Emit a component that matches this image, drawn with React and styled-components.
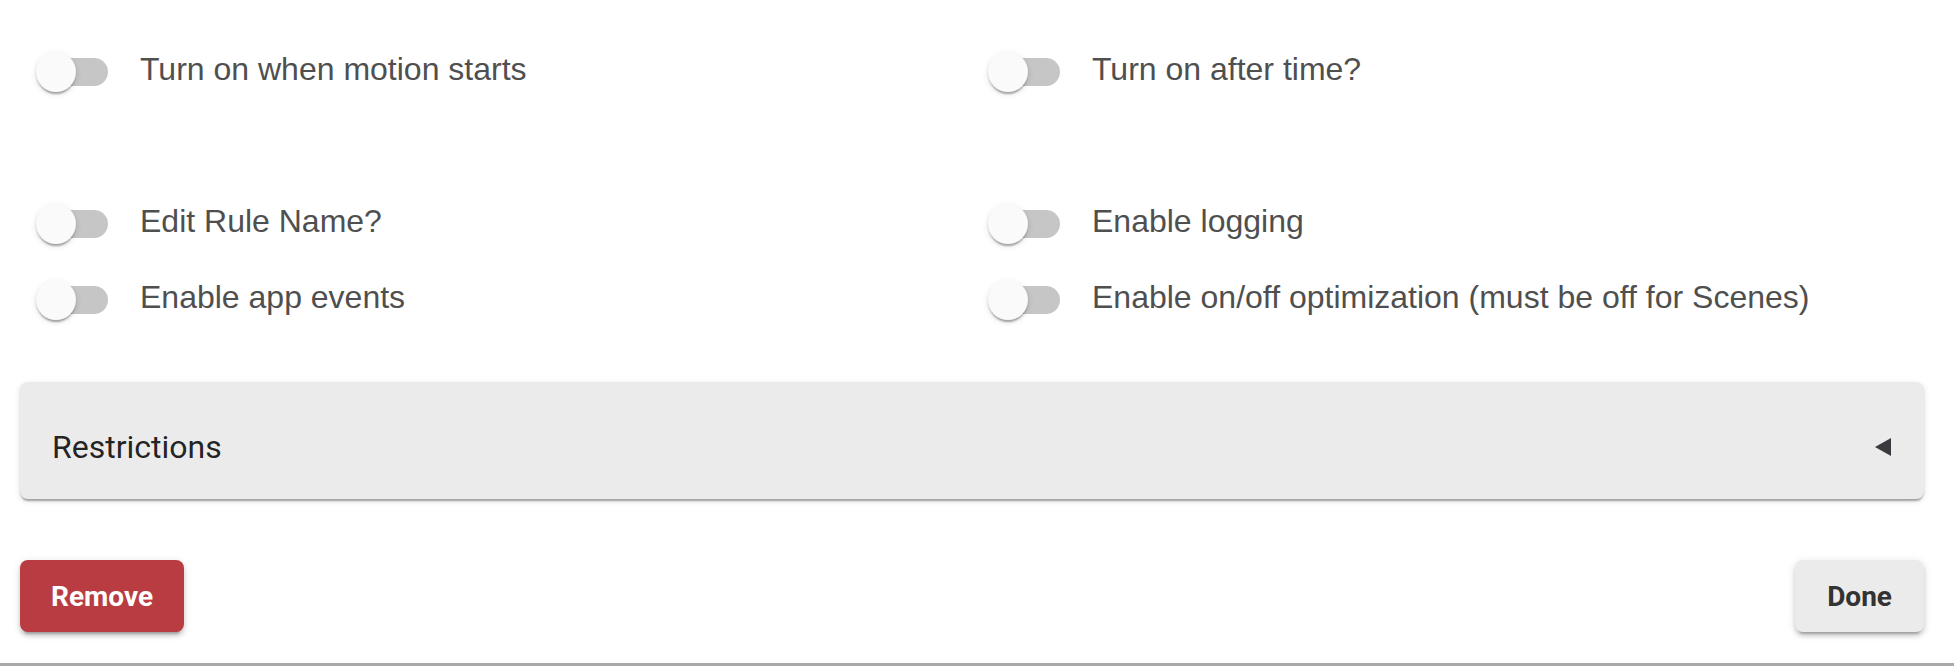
import styled, { createGlobalStyle } from "styled-components";

const GlobalStyle = createGlobalStyle`
  html, body {
    margin: 0;
    padding: 0;
    background: #fff;
  }
`;

const Page = styled.div`
  width: 1954px;
  height: 666px;
  display: flex;
  flex-direction: column;
  overflow: hidden;
`;

const ToggleGrid = styled.div`
  display: grid;
  grid-template-columns: 952px 1fr;
  grid-auto-rows: 76px;
  padding-left: 18px;
  margin-top: ${(p) => p.$top || 0}px;
`;

const ToggleLabel = styled.label`
  display: flex;
  align-items: center;
  gap: 6px;
  cursor: pointer;
`;

const SwitchRoot = styled.span`
  position: relative;
  flex: 0 0 116px;
  height: 76px;
  padding: 24px;
  box-sizing: border-box;
`;

const Track = styled.span`
  display: block;
  width: 66px;
  height: 28px;
  border-radius: 14px;
  background: #c6c6c6;
`;

const Thumb = styled.span`
  position: absolute;
  left: 18px;
  top: 18px;
  width: 40px;
  height: 40px;
  border-radius: 50%;
  background: #fafafa;
  box-shadow: 0 4px 2px -2px rgba(0, 0, 0, 0.2), 0 2px 2px 0 rgba(0, 0, 0, 0.14),
    0 2px 6px 0 rgba(0, 0, 0, 0.12);
`;

const LabelText = styled.span`
  font-family: "Liberation Sans", Arial, sans-serif;
  font-size: 32px;
  color: #4f4f4f;
  padding-bottom: 6px;
  white-space: nowrap;
`;

const Accordion = styled.div`
  margin: 44px 30px 0 20px;
  height: 117px;
  box-sizing: border-box;
  padding: 12px 33px 0 32px;
  display: flex;
  align-items: center;
  justify-content: space-between;
  background: #ebebeb;
  border-radius: 8px;
  box-shadow: 0 4px 2px -2px rgba(0, 0, 0, 0.2), 0 2px 2px 0 rgba(0, 0, 0, 0.14),
    0 2px 6px 0 rgba(0, 0, 0, 0.12);
`;

const AccordionTitle = styled.span`
  font-family: Roboto, "Liberation Sans", sans-serif;
  font-size: 32px;
  color: rgba(0, 0, 0, 0.87);
`;

const ButtonRow = styled.div`
  display: flex;
  justify-content: space-between;
  margin: 61px 30px 31px 20px;
`;

const Button = styled.button`
  height: 72px;
  padding: 0 ${(p) => (p.$danger ? 31 : 32)}px;
  border: none;
  border-radius: 8px;
  font-family: Roboto, "Liberation Sans", sans-serif;
  font-size: 28px;
  font-weight: 700;
  background: ${(p) => (p.$danger ? "#b93c42" : "#ebebeb")};
  color: ${(p) => (p.$danger ? "#fff" : "#333")};
  box-shadow: 0 6px 2px -4px rgba(0, 0, 0, 0.2), 0 4px 4px 0 rgba(0, 0, 0, 0.14),
    0 2px 10px 0 rgba(0, 0, 0, 0.12);
  cursor: pointer;
`;

const Divider = styled.div`
  height: 3px;
  background: #a9a9a9;
`;

function Toggle({ label }) {
  return (
    <ToggleLabel>
      <SwitchRoot>
        <Track />
        <Thumb />
      </SwitchRoot>
      <LabelText>{label}</LabelText>
    </ToggleLabel>
  );
}

export default function App() {
  return (
    <>
      <GlobalStyle />
      <Page>
        <ToggleGrid $top={34}>
          <Toggle label="Turn on when motion starts" />
          <Toggle label="Turn on after time?" />
        </ToggleGrid>
        <ToggleGrid $top={76}>
          <Toggle label="Edit Rule Name?" />
          <Toggle label="Enable logging" />
          <Toggle label="Enable app events" />
          <Toggle label="Enable on/off optimization (must be off for Scenes)" />
        </ToggleGrid>
        <Accordion>
          <AccordionTitle>Restrictions</AccordionTitle>
          <svg width="16" height="18" viewBox="0 0 16 18">
            <polygon points="16,0 16,18 0,9" fill="#383a3e" />
          </svg>
        </Accordion>
        <ButtonRow>
          <Button $danger>Remove</Button>
          <Button>Done</Button>
        </ButtonRow>
        <Divider />
      </Page>
    </>
  );
}
